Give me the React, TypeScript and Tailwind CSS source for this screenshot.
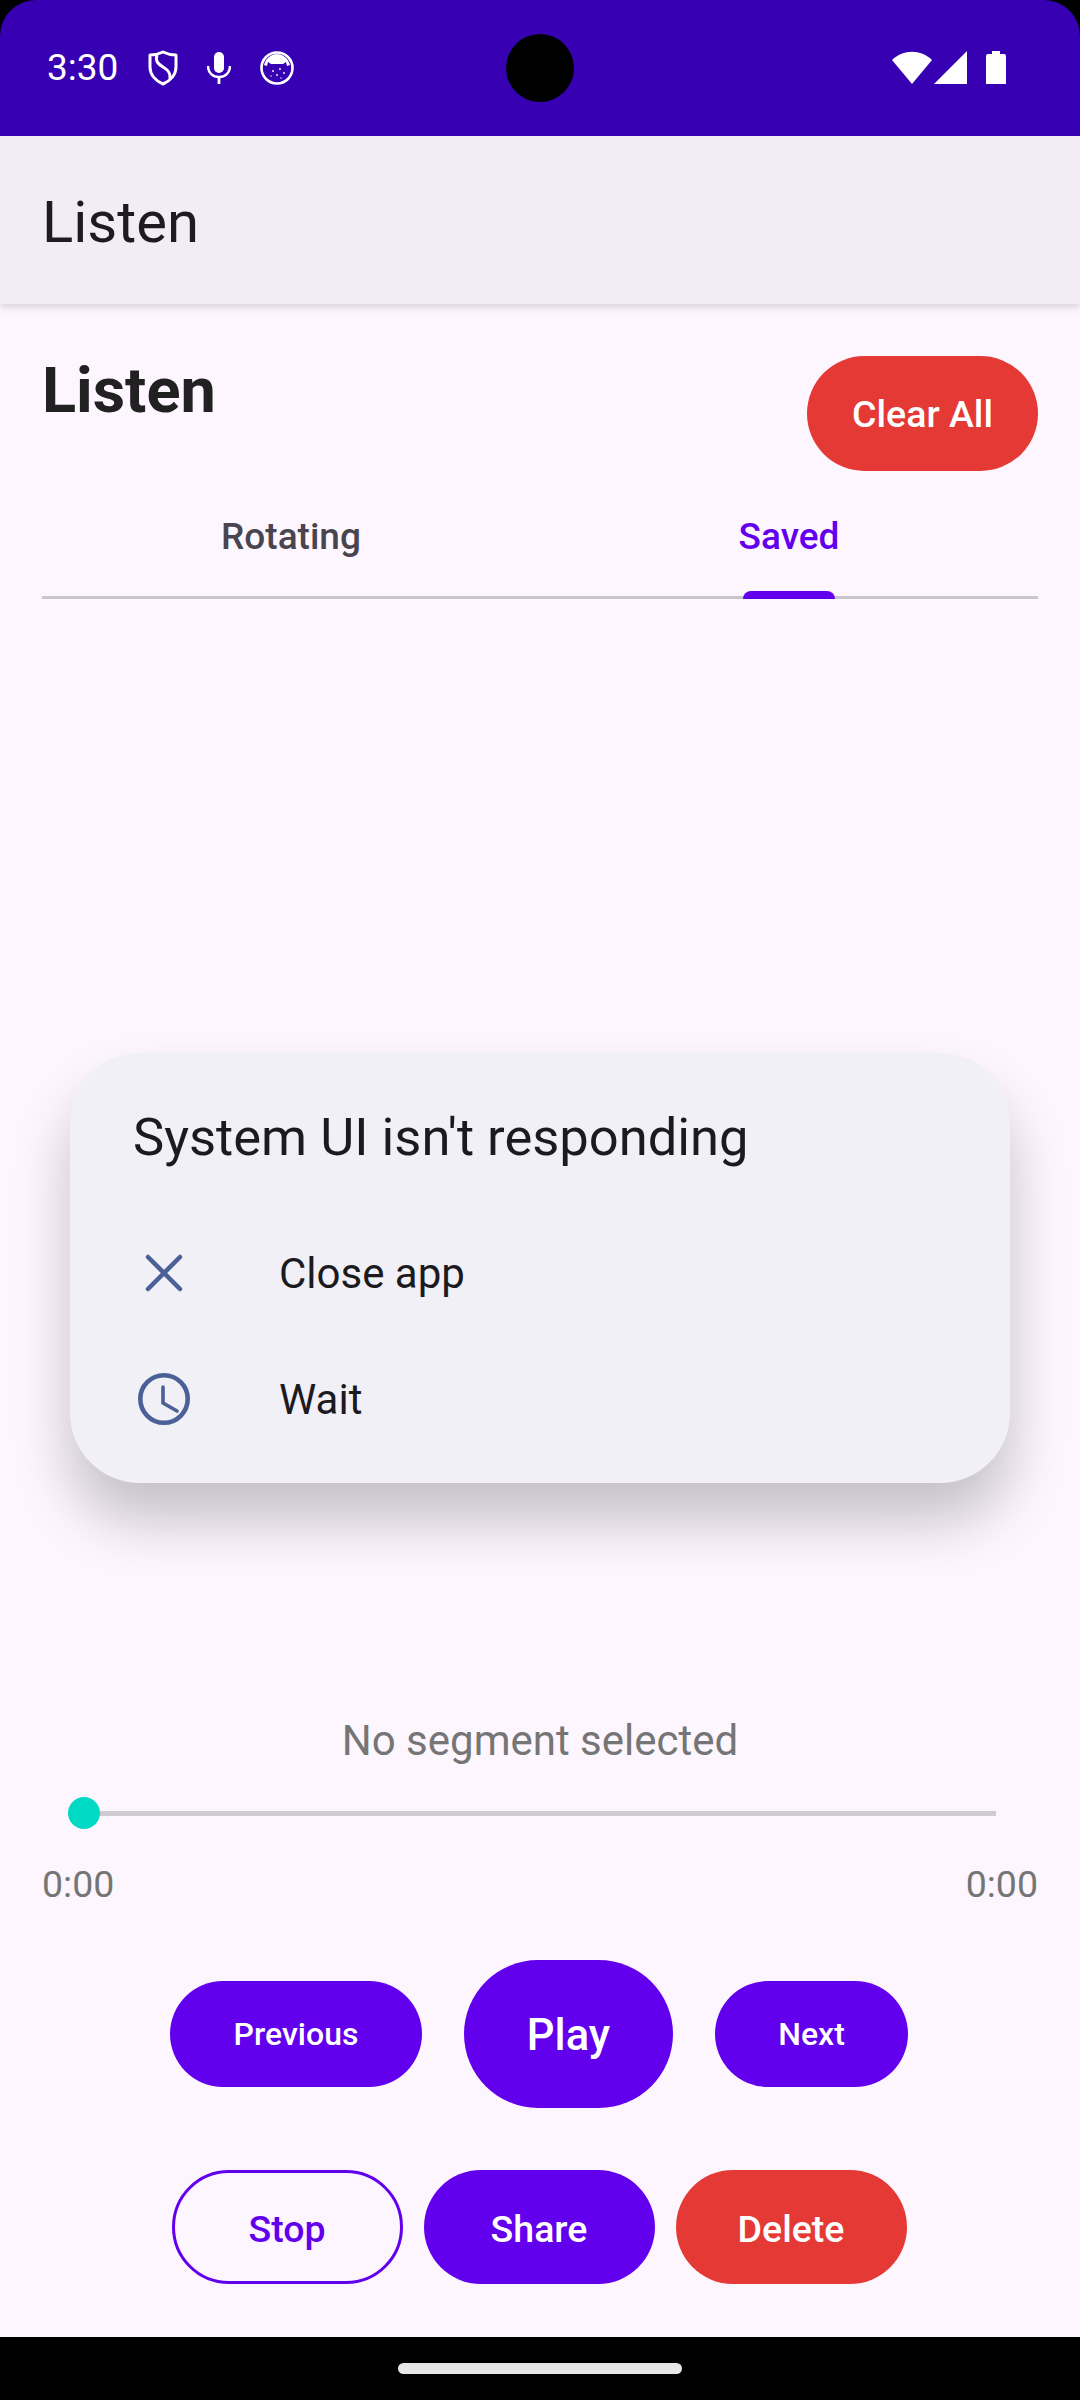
const font = "font-['Roboto',sans-serif]";

function Shield() {
  return (
    <svg width="30" height="36" viewBox="0 0 30 36" fill="none" stroke="white" strokeWidth="3">
      <path d="M15 2 C19 4 24 5 28 5 V17 C28 25 22 31 15 34 C8 31 2 25 2 17 V5 C6 5 11 4 15 2 Z" strokeLinejoin="round" />
      <path d="M9 5 C7 11 10 14 15 17 C20 20 23 23 22 29" />
    </svg>
  );
}

function Mic() {
  return (
    <svg width="24" height="32" viewBox="0 0 24 32" fill="white">
      <rect x="7" y="0" width="10" height="21" rx="5" />
      <path d="M1 14 C1 21 6 25 12 25 C18 25 23 21 23 14" fill="none" stroke="white" strokeWidth="2.5" />
      <rect x="10.6" y="24" width="2.8" height="8" />
    </svg>
  );
}

function CatBadge() {
  return (
    <svg width="34" height="34" viewBox="0 0 34 34">
      <circle cx="17" cy="17" r="15.5" fill="none" stroke="white" strokeWidth="2.6" />
      <path d="M4 14 C6 7 11 3 17 3 C23 3 28 7 30 14 L27 15 L26 11 L23 13 H11 L8 11 L7 15 Z" fill="white" />
      <g fill="white">
        <circle cx="13" cy="20" r="0.9" />
        <circle cx="20" cy="18" r="0.9" />
        <circle cx="24" cy="22" r="0.9" />
        <circle cx="17" cy="24" r="0.9" />
        <circle cx="11" cy="25" r="0.7" />
        <circle cx="21" cy="27" r="0.7" />
      </g>
    </svg>
  );
}

function StatusRight() {
  return (
    <div className="flex items-center">
      <svg width="40" height="33" viewBox="0 0 40 33" fill="white">
        <path d="M0 9 C11 -2 29 -2 40 9 L20 33 Z" />
      </svg>
      <svg width="33" height="33" viewBox="0 0 33 33" fill="white" className="ml-[2px]">
        <path d="M33 0 V33 H0 Z" />
      </svg>
      <svg width="20" height="33" viewBox="0 0 20 33" fill="white" className="ml-[19px]">
        <path d="M6 0 H14 V3 H18 Q20 3 20 5 V33 H0 V5 Q0 3 2 3 H6 Z" />
      </svg>
    </div>
  );
}

function Pill({ label, className }: { label: string; className: string }) {
  return (
    <button className={`flex items-center justify-center rounded-full font-medium ${className}`}>
      {label}
    </button>
  );
}

export default function App() {
  return (
    <div className={`${font} relative flex flex-col w-[1080px] h-[2400px] overflow-hidden bg-black`}>
      {/* Status bar */}
      <div className="relative flex items-center justify-between h-[136px] pl-[47px] pr-[74px] pb-[1px] bg-[#3700b3] rounded-t-[36px]">
        <div className="flex items-center">
          <span className="text-[37px] leading-none text-white">3:30</span>
          <span className="ml-[30px] flex"><Shield /></span>
          <span className="ml-[29px] flex"><Mic /></span>
          <span className="ml-[29px] flex"><CatBadge /></span>
        </div>
        <StatusRight />
        <div className="absolute left-[506px] top-[34px] w-[68px] h-[68px] rounded-full bg-black" />
      </div>

      {/* App bar */}
      <div className="relative z-10 flex items-center h-[168px] px-[42px] pt-[3px] bg-[#f1ecf6] shadow-[0_3px_8px_rgba(0,0,0,0.16)]">
        <span className="text-[58px] leading-none text-[#1c1b1f]">Listen</span>
      </div>

      {/* Screen */}
      <div className="flex flex-col flex-1 px-[42px] bg-[#fdf6ff]">
        <div className="flex items-start justify-between pt-[52px]">
          <h1 className="-mt-[2px] text-[63px] leading-[74px] font-bold text-[#212121]">Listen</h1>
          <Pill label="Clear All" className="w-[231px] h-[115px] pt-[2px] bg-[#e53935] text-white text-[37.5px]" />
        </div>

        {/* Tabs */}
        <div className="relative grid grid-cols-2 h-[128px] border-b-[3px] border-[#c9c5cd]">
          <div className="flex items-center justify-center pt-[6px] text-[37px] font-medium text-[#49454f]">Rotating</div>
          <div className="relative flex items-center justify-center pt-[6px] text-[37px] font-medium text-[#6200ee]">
            Saved
            <span className="absolute bottom-[-3px] left-[203px] w-[92px] h-[8px] rounded-t-[8px] bg-[#6200ee]" />
          </div>
        </div>

        <div className="flex-1" />

        {/* Player */}
        <p className="text-center text-[42px] leading-[46px] text-[#757575]">No segment selected</p>
        <div className="relative h-[32px] mt-[33px] ml-[26px] mr-[42px] flex items-center">
          <div className="w-full h-[5px] bg-[#cfcbd3]" />
          <span className="absolute left-0 w-[32px] h-[32px] rounded-full bg-[#00dac5]" />
        </div>
        <div className="flex justify-between mt-[33px] text-[37.5px] leading-[44px] text-[#757575]">
          <span>0:00</span>
          <span>0:00</span>
        </div>

        <div className="flex items-center justify-center gap-[42px] mt-[54px] pr-[2px]">
          <Pill label="Previous" className="w-[252px] h-[106px] bg-[#6200ee] text-white text-[32px]" />
          <Pill label="Play" className="w-[209px] h-[148px] pt-[3px] bg-[#6200ee] text-white text-[43.5px]" />
          <Pill label="Next" className="w-[193px] h-[106px] bg-[#6200ee] text-white text-[32px]" />
        </div>

        <div className="flex items-center justify-center gap-[21px] mt-[62px] mb-[53px] pr-[2px]">
          <Pill label="Stop" className="w-[231px] h-[114px] pt-[4px] border-[3px] border-[#6200ee] text-[#6200ee] text-[37.5px]" />
          <Pill label="Share" className="w-[231px] h-[114px] pt-[4px] bg-[#6200ee] text-white text-[37.5px]" />
          <Pill label="Delete" className="w-[231px] h-[114px] pt-[4px] bg-[#e53935] text-white text-[37.5px]" />
        </div>
      </div>

      {/* Nav bar */}
      <div className="flex items-center justify-center h-[63px] bg-black">
        <span className="w-[284px] h-[11px] rounded-full bg-[#e6e6e6]" />
      </div>

      {/* ANR dialog */}
      <div className="absolute z-20 left-[70px] top-[1053px] w-[940px] h-[430px] rounded-[70px] bg-[#f1f0f6] shadow-[0_38px_56px_rgba(0,0,0,0.22)]">
        <div className="pl-[63px] pt-[53px] text-[52.5px] leading-[62px] text-[#1b1b1f]">System UI isn't responding</div>
        <div className="flex items-center mt-[42px] h-[126px] pl-[63px]">
          <svg width="62" height="62" viewBox="0 0 62 62" fill="none" stroke="#4a6096" strokeWidth="4.5" strokeLinecap="round">
            <path d="M15 15 L47 47 M47 15 L15 47" />
          </svg>
          <span className="ml-[84px] text-[42px] text-[#1b1b1f]">Close app</span>
        </div>
        <div className="flex items-center h-[126px] pl-[63px]">
          <svg width="62" height="62" viewBox="0 0 62 62" fill="none" stroke="#4a6096" strokeLinecap="round">
            <circle cx="31" cy="31" r="23.7" strokeWidth="4.6" />
            <path d="M30 19 V35 L44 43" strokeWidth="3.6" />
          </svg>
          <span className="ml-[84px] text-[42px] text-[#1b1b1f]">Wait</span>
        </div>
      </div>
    </div>
  );
}
